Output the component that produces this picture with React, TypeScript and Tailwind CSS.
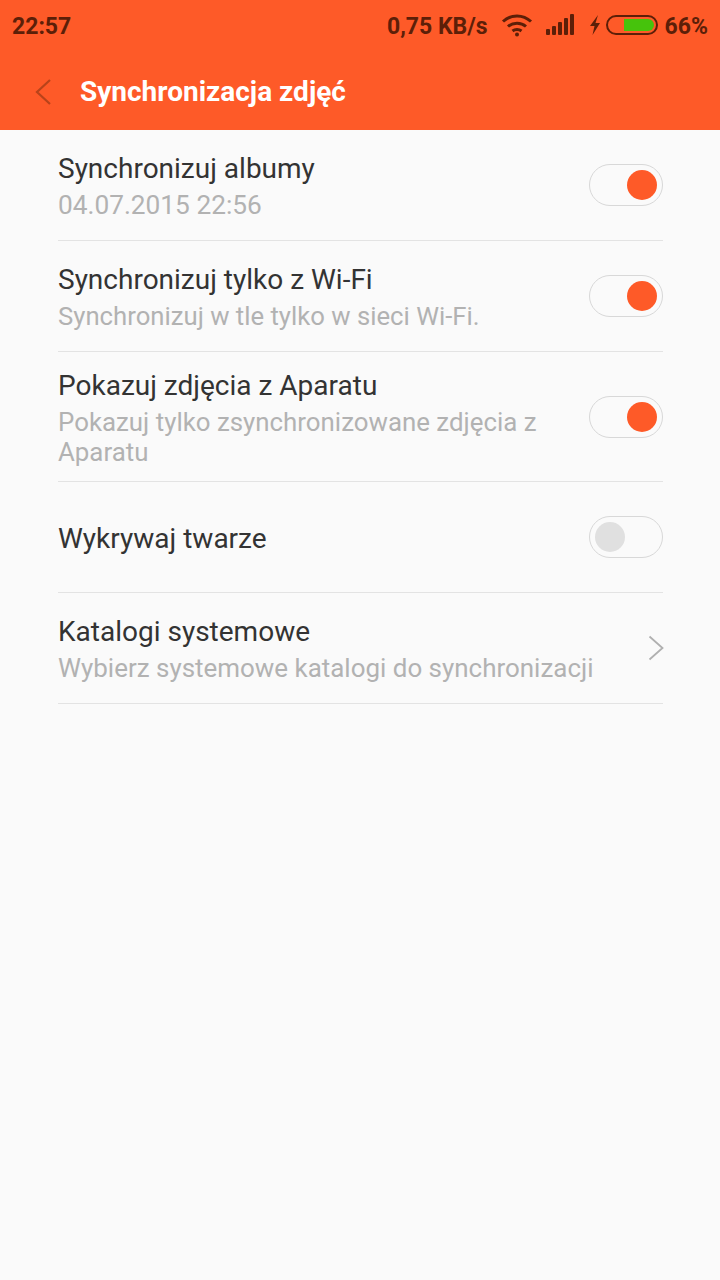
import React from "react";

const orange = "bg-[#fe5a28]";

const Toggle = ({ on }: { on: boolean }) => (
  <div
    className={`flex h-[42px] w-[74px] shrink-0 items-center rounded-full border border-[#d8d8d8] px-[5px] ${
      on ? "justify-end" : "justify-start"
    }`}
  >
    <div className={`h-[30px] w-[30px] rounded-full ${on ? orange : "bg-[#e0e0e0]"}`}></div>
  </div>
);

const Chevron = () => (
  <svg width="16" height="26" viewBox="0 0 16 26" fill="none" className="mr-[-1px] shrink-0">
    <path d="M1.5 1.5 L14.5 13 L1.5 24.5" stroke="#b0b0b0" strokeWidth="1.8" />
  </svg>
);

const Row = ({
  title,
  sub,
  subSize = "text-[25.75px]",
  height,
  right,
}: {
  title: string;
  sub?: string;
  subSize?: string;
  height: string;
  right: React.ReactNode;
}) => (
  <div className={`flex ${height} items-center justify-between border-b border-[#e3e3e3]`}>
    <div className={`w-[540px] ${sub ? "pb-[4px]" : "pt-[2px]"}`}>
      <div className="pt-[2px] text-[28px] leading-[42px] text-[#333333]">{title}</div>
      {sub && <div className={`${subSize} leading-[30px] text-[#b2b2b2]`}>{sub}</div>}
    </div>
    {right}
  </div>
);

const StatusIcons = () => (
  <>
    {/* wifi */}
    <svg width="32" height="24" viewBox="0 0 32 24" fill="none" stroke="#5c1f08" strokeWidth="3">
      <path d="M2 8.5 C10 1 22 1 30 8.5" />
      <path d="M7 13.5 C12 9 20 9 25 13.5" />
      <path d="M11.5 18 C14 16 18 16 20.5 18" />
      <circle cx="16" cy="21.5" r="2" fill="#5c1f08" stroke="none" />
    </svg>
    {/* signal */}
    <svg width="30" height="24" viewBox="0 0 30 24" fill="#5c1f08" className="ml-[12px]">
      <rect x="1" y="16" width="4" height="6" rx="1" />
      <rect x="7" y="13" width="4" height="9" rx="1" />
      <rect x="13" y="9" width="4" height="13" rx="1" />
      <rect x="19" y="5" width="4" height="17" rx="1" />
      <rect x="25" y="1" width="4" height="21" rx="1" />
    </svg>
    {/* bolt */}
    <svg width="12" height="22" viewBox="0 0 12 22" fill="#5c1f08" className="ml-[14px]">
      <path d="M9 1 L1 12 L5.5 12 L3.5 21 L11 9 L6.5 9 Z" />
    </svg>
    {/* battery */}
    <div className="ml-[5px] flex h-[20px] w-[52px] justify-end overflow-hidden rounded-full border-2 border-[#5c1f08] p-[2px]">
      <div className="h-full w-[30px] rounded-r-full bg-[#46c30c]"></div>
    </div>
  </>
);

export default function App() {
  return (
    <div className="flex h-[1280px] w-[720px] flex-col bg-[#fafafa] font-['Roboto',sans-serif]">
      <div className={orange}>
        <div className="flex h-[50px] items-center justify-between pl-[12px] pr-[12px] text-[23px] font-bold text-[#5c1f08]">
          <span className="pt-[5px]">22:57</span>
          <div className="flex items-center">
            <span className="mr-[13px] pt-[5px]">0,75 KB/s</span>
            <StatusIcons />
            <span className="ml-[7px] pt-[5px]">66%</span>
          </div>
        </div>
        <div className="flex h-[80px] items-center pt-[3px] pl-[35px]">
          <svg width="16" height="26" viewBox="0 0 16 26" fill="none">
            <path d="M15 1 L2 13 L15 25" stroke="#b8431a" strokeWidth="2.2" />
          </svg>
          <span className="ml-[29px] text-[28px] font-bold text-white">Synchronizacja zdjęć</span>
        </div>
      </div>

      <div className="pl-[58px] pr-[57px]">
        <Row title="Synchronizuj albumy" sub="04.07.2015 22:56" subSize="text-[26.25px]" height="h-[111px]" right={<Toggle on />} />
        <Row title="Synchronizuj tylko z Wi-Fi" sub="Synchronizuj w tle tylko w sieci Wi-Fi." subSize="text-[25.7px]" height="h-[111px]" right={<Toggle on />} />
        <Row
          title="Pokazuj zdjęcia z Aparatu"
          sub="Pokazuj tylko zsynchronizowane zdjęcia z Aparatu"
          subSize="text-[25.85px]"
          height="h-[130px]"
          right={<Toggle on />}
        />
        <Row title="Wykrywaj twarze" height="h-[111px]" right={<Toggle on={false} />} />
        <Row title="Katalogi systemowe" sub="Wybierz systemowe katalogi do synchronizacji" subSize="text-[25.95px]" height="h-[111px]" right={<Chevron />} />
      </div>
    </div>
  );
}
